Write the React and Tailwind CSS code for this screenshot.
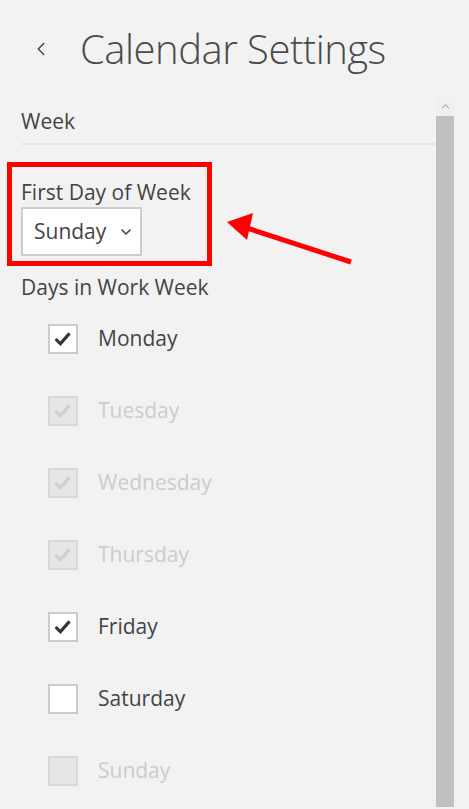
import { ChevronLeft, ChevronDown } from 'lucide-react';

const days = [
  { name: 'Monday', checked: true, disabled: false },
  { name: 'Tuesday', checked: true, disabled: true },
  { name: 'Wednesday', checked: true, disabled: true },
  { name: 'Thursday', checked: true, disabled: true },
  { name: 'Friday', checked: true, disabled: false },
  { name: 'Saturday', checked: false, disabled: false },
  { name: 'Sunday', checked: false, disabled: true },
];

function Check({ color }) {
  return (
    <svg viewBox="0 0 30 30" className="w-[26px] h-[26px]">
      <path d="M6.5 15 L12 20.5 L22.5 8.5" fill="none" stroke={color} strokeWidth="3.6" />
    </svg>
  );
}

function DayRow({ day }) {
  const box = day.disabled
    ? 'bg-[#e6e6e6] border-[#d9d9d9]'
    : 'bg-white border-[#cccccc]';
  return (
    <div className="flex items-center h-[72px]">
      <div className={`w-[30px] h-[30px] border-2 flex items-center justify-center ${box}`}>
        {day.checked && <Check color={day.disabled ? '#cfcfcf' : '#333333'} />}
      </div>
      <span className={`ml-5 text-[21px] ${day.disabled ? 'text-[#cccccc]' : 'text-[#444444]'}`}>
        {day.name}
      </span>
    </div>
  );
}

export default function App() {
  return (
    <div className="w-[469px] h-[809px] overflow-hidden bg-[#f2f2f2] font-['Open_Sans',sans-serif] relative">
      <header className="flex items-center h-[97px] pl-[30px]">
        <ChevronLeft className="w-[22px] h-[22px] text-[#444]" strokeWidth={1.5} />
        <h1 className="ml-[28px] text-[40px] font-light text-[#4a4a4a] tracking-[-0.5px]">Calendar Settings</h1>
      </header>

      <div className="flex">
        <div className="w-[436px] pl-[21px]">
          <div className="pt-[9px] h-[48px] border-b-2 border-[#e6e6e6] text-[21px] text-[#444]">Week</div>

          <div className="relative mt-[34px]">
            <div className="text-[21px] text-[#444] leading-[26px]">First Day of Week</div>
            <div className="mt-[2px] w-[121px] h-[49px] bg-white border-2 border-[#cccccc] flex items-center pl-[11px] pr-[6px] justify-between">
              <span className="text-[21px] text-[#444]">Sunday</span>
              <ChevronDown className="w-[16px] h-[16px] text-[#444]" strokeWidth={2.5} />
            </div>
            <div className="absolute left-[-14px] top-[-17px] w-[205px] h-[104px] border-[5px] border-[#ff0000]" />
          </div>

          <div className="mt-[18px] text-[21px] text-[#444] leading-[26px]">Days in Work Week</div>
          <div className="pl-[27px] mt-[3px]">
            {days.map((d) => (
              <DayRow key={d.name} day={d} />
            ))}
          </div>
        </div>

        <div className="w-[18px] flex flex-col">
          <div className="h-[19px] flex items-center justify-center bg-[#f0f0f0]">
            <svg viewBox="0 0 10 6" className="w-[9px] h-[5px]">
              <path d="M1 5 L5 1 L9 5" fill="none" stroke="#777" strokeWidth="1" />
            </svg>
          </div>
          <div className="flex-1 h-[700px] bg-[#c0c0c0]" />
        </div>
      </div>

      <svg className="absolute left-[220px] top-[210px]" width="140" height="60" viewBox="0 0 140 60">
        <line x1="131" y1="52" x2="24" y2="17" stroke="#ff0000" strokeWidth="5" />
        <polygon points="7,12 33,3 27,30" fill="#ff0000" />
      </svg>
    </div>
  );
}
